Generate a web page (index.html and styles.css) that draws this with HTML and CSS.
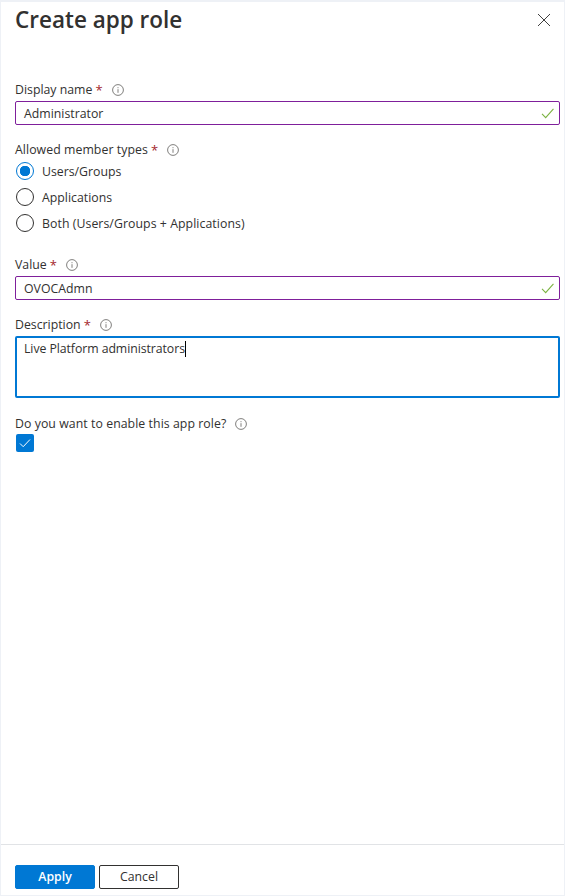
FILE: index.html
```html
<!DOCTYPE html>
<html lang="en">
<head>
<meta charset="utf-8">
<title>Create app role</title>
<link rel="stylesheet" href="styles.css">
</head>
<body>
<div class="panel">
  <main class="content">
    <div class="title-row">
      <h1 class="title">Create app role</h1>
      <button class="close" aria-label="Close">
        <svg width="14" height="14" viewBox="0 0 14 14"><path d="M1 1l12 12M13 1L1 13" stroke="#404040" stroke-width="1" fill="none"/></svg>
      </button>
    </div>

    <div class="field field-name">
      <div class="label"><span>Display name</span><span class="req">*</span><svg class="info" viewBox="0 0 12 12"><circle cx="6" cy="6" r="5.4"/><path d="M6 5.2v3.6M6 3.2v1"/></svg></div>
      <div class="input valid"><span>Administrator</span>
        <svg class="check" viewBox="0 0 14 12"><path d="M1 6.5l4 4L13.5 1"/></svg></div>
    </div>

    <div class="field field-types">
      <div class="label"><span class="wide">Allowed member types</span><span class="req">*</span><svg class="info" viewBox="0 0 12 12"><circle cx="6" cy="6" r="5.4"/><path d="M6 5.2v3.6M6 3.2v1"/></svg></div>
      <div class="radios">
        <div class="radio-row"><span class="radio on"></span><span>Users/Groups</span></div>
        <div class="radio-row"><span class="radio"></span><span>Applications</span></div>
        <div class="radio-row"><span class="radio"></span><span class="wide">Both (Users/Groups + Applications)</span></div>
      </div>
    </div>

    <div class="field field-value">
      <div class="label"><span>Value</span><span class="req">*</span><svg class="info" viewBox="0 0 12 12"><circle cx="6" cy="6" r="5.4"/><path d="M6 5.2v3.6M6 3.2v1"/></svg></div>
      <div class="input valid"><span>OVOCAdmn</span>
        <svg class="check" viewBox="0 0 14 12"><path d="M1 6.5l4 4L13.5 1"/></svg></div>
    </div>

    <div class="field field-desc">
      <div class="label"><span>Description</span><span class="req">*</span><svg class="info" viewBox="0 0 12 12"><circle cx="6" cy="6" r="5.4"/><path d="M6 5.2v3.6M6 3.2v1"/></svg></div>
      <div class="textarea"><span class="narrow">Live Platform administrators</span><span class="caret"></span></div>
    </div>

    <div class="field field-enable">
      <div class="label"><span class="wide">Do you want to enable this app role?</span><svg class="info" viewBox="0 0 12 12"><circle cx="6" cy="6" r="5.4"/><path d="M6 5.2v3.6M6 3.2v1"/></svg></div>
      <div class="checkbox"><svg viewBox="0 0 18 18"><path d="M4 9.5l3.2 3.2L14 5.5"/></svg></div>
    </div>
  </main>
  <footer class="footer">
    <button class="btn primary">Apply</button>
    <button class="btn secondary">Cancel</button>
  </footer>
</div>
</body>
</html>
```
FILE: styles.css
```css
* { box-sizing: border-box; }
html, body { margin: 0; height: 100%; background: #fff; }
body {
  font-family: "Open Sans", "Noto Sans", "Liberation Sans", sans-serif;
  font-size: 12.3px;
  color: #323130;
  overflow: hidden;
}
.panel {
  height: 896px;
  display: flex;
  flex-direction: column;
  border-top: 2px solid #eef1f6;
  border-left: 1px solid #eef1f6;
  border-right: 1px solid #eef1f6;
  border-bottom: 1px solid #eef1f6;
}
.content { flex: 1; padding: 0 4px 0 14px; }
.title-row { display: flex; justify-content: space-between; align-items: center; height: 36px; }
.title { margin: 0; font-size: 22.5px; font-weight: 600; line-height: 36px; color: #323130; }
.close { border: 0; background: none; padding: 0; margin-right: 9px; display: flex; }
.label { display: flex; align-items: center; height: 16px; line-height: 16px; }
.req { color: #a4262c; margin-left: 3px; font-size: 13px; }
.info { width: 12px; height: 12px; margin-left: 9px; fill: none; stroke: #605e5c; stroke-width: 0.8; }
.input {
  height: 24px;
  margin-top: 3px;
  display: flex;
  align-items: center;
  justify-content: space-between;
  padding: 0 5px 0 8px;
  border: 1px solid #7f1f9b;
  border-radius: 2px;
}
.check { width: 13px; height: 11px; fill: none; stroke: #7cb342; stroke-width: 1.2; }
.wide { letter-spacing: 0.06px; }
.narrow { letter-spacing: -0.07px; }
.field-name { margin-top: 44px; }
.field-types { margin-top: 17px; }
.field-value { margin-top: 25px; }
.field-desc { margin-top: 17px; }
.field-enable { margin-top: 18px; }
.radios { margin-top: 4px; display: flex; flex-direction: column; gap: 8px; }
.radio-row { display: flex; align-items: center; gap: 8px; height: 18px; margin-left: 1px; }
.radio { width: 18px; height: 18px; border-radius: 50%; border: 1px solid #323130; flex: none; }
.radio.on {
  border-color: #0078d4;
  background: radial-gradient(circle, #0078d4 0 5px, #fff 5.5px);
}
.textarea {
  height: 62px;
  margin-top: 3px;
  padding: 3px 7px;
  border: 2px solid #0078d4;
  border-radius: 2px;
  line-height: 16px;
  display: flex;
  align-items: flex-start;
}
.caret { width: 1px; height: 16px; background: #000; }
.checkbox {
  width: 18px;
  height: 18px;
  margin: 2px 0 0 1px;
  background: #0078d4;
  border-radius: 2px;
}
.checkbox svg { display: block; width: 18px; height: 18px; fill: none; stroke: #fff; stroke-width: 1; }
.footer {
  height: 51px;
  flex: none;
  border-top: 1px solid #e1e3e6;
  padding: 20px 0 0 14px;
  display: flex;
  gap: 4px;
  align-items: flex-start;
}
.btn {
  width: 80px;
  height: 24px;
  border-radius: 2px;
  padding: 0;
  font: inherit;
  line-height: 20px;
}
.primary { background: #0078d4; border: 1px solid #0078d4; color: #fff; font-weight: 600; }
.secondary { background: #fff; border: 1px solid #323130; color: #323130; font-weight: 400; }
```
